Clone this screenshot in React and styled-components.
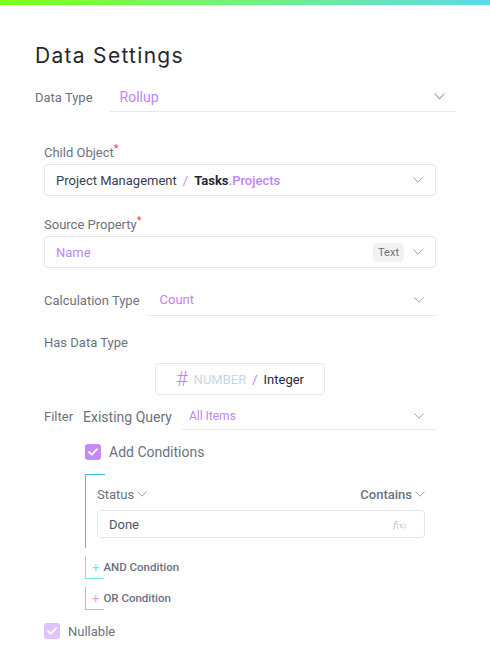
import React from 'react';
import styled, { createGlobalStyle } from 'styled-components';

const purple = '#c084fc';
const gray = '#6b7280';
const border = '#e5e7eb';

const GlobalStyle = createGlobalStyle`
  body {
    margin: 0;
    background: #ffffff;
    font-family: Roboto, Inter, Arial, sans-serif;
    color: #374151;
  }
  * { box-sizing: border-box; }
`;

const Page = styled.div`
  width: 490px;
  min-height: 652px;
  background: #fff;
`;

const TopBar = styled.div`
  height: 5px;
  background: linear-gradient(90deg, #7cff14 0%, #6ef08a 55%, #5cd9e8 100%);
`;

const Content = styled.div`
  padding: 37px 35px 0 35px;
`;

const Title = styled.h1`
  margin: 0;
  font-family: Inter, Roboto, sans-serif;
  font-size: 21px;
  line-height: 28px;
  font-weight: 400;
  letter-spacing: 1.3px;
  color: #27272a;
`;

const Row = styled.div`
  display: flex;
  align-items: center;
  margin-top: ${p => p.$top || 0}px;
`;

const InlineLabel = styled.span`
  font-size: ${p => p.$size || 13}px;
  color: ${gray};
  margin-right: ${p => p.$gap || 11}px;
  white-space: nowrap;
`;

const UnderSelect = styled.div`
  flex: 1;
  display: flex;
  align-items: center;
  justify-content: space-between;
  height: ${p => p.$h || 32}px;
  padding: 0 ${p => p.$pr || 12}px 0 ${p => p.$pl || 10}px;
  border-bottom: 1px solid ${border};
`;

const Value = styled.span`
  color: ${purple};
  font-size: ${p => p.$size || 13}px;
`;

const Section = styled.div`
  margin: 0 19px 0 9px;
`;

const FieldLabel = styled.div`
  font-size: 13px;
  line-height: 18px;
  color: ${gray};
  margin-top: ${p => p.$top || 0}px;
  margin-bottom: 2px;
  sup {
    color: #ef4444;
    font-size: 11px;
    vertical-align: top;
    line-height: 10px;
  }
`;

const BoxSelect = styled.div`
  display: flex;
  align-items: center;
  height: 32px;
  padding: 0 12px 0 11px;
  border: 1px solid ${border};
  border-radius: 4px;
  font-size: 13px;
`;

const Grow = styled.div`
  flex: 1;
  white-space: nowrap;
`;

const Path = styled.span`
  color: #374151;
`;

const Slash = styled.span`
  color: ${purple};
  margin: 0 6px;
`;

const Strong = styled.span`
  color: #1f2937;
  font-weight: 700;
`;

const Accent = styled.span`
  color: ${purple};
  font-weight: 500;
`;

const Badge = styled.span`
  font-size: 11px;
  color: #6b7280;
  background: #f1f2f4;
  border-radius: 4px;
  padding: 3px 5px;
  margin-right: 9px;
`;

const TypeWrap = styled.div`
  display: flex;
  justify-content: center;
  margin-top: 11px;
`;

const TypeBox = styled.div`
  display: flex;
  align-items: center;
  justify-content: center;
  width: 170px;
  height: 32px;
  border: 1px solid ${border};
  border-radius: 4px;
  font-size: 13px;
`;

const Hash = styled.span`
  color: ${purple};
  font-size: 20px;
  font-weight: 300;
  margin-right: 6px;
  line-height: 1;
`;

const Muted = styled.span`
  color: #cbd5e1;
`;

const Dark = styled.span`
  color: #1f2937;
`;

const Indent = styled.div`
  margin-left: 41px;
`;

const CheckRow = styled.label`
  display: flex;
  align-items: center;
  gap: 8px;
  margin-top: ${p => p.$top || 0}px;
  font-size: ${p => p.$size || 14}px;
  color: ${gray};
`;

const CheckBox = styled.span`
  width: 16px;
  height: 16px;
  border-radius: 3px;
  background: ${p => (p.$disabled ? '#dec4fb' : '#c48af8')};
  display: flex;
  align-items: center;
  justify-content: center;
`;

const ConditionBlock = styled.div`
  position: relative;
  margin-top: 14px;
  padding: 11px 11px 10px 11px;
  border-left: 1px solid #3fbff5;
  &::before {
    content: '';
    position: absolute;
    left: -1px;
    top: 0;
    width: 20px;
    height: 1px;
    background: #3fbff5;
  }
`;

const CondHead = styled.div`
  display: flex;
  justify-content: space-between;
  align-items: center;
  font-size: 13px;
  color: ${gray};
  height: 18px;
`;

const HeadItem = styled.span`
  display: flex;
  align-items: center;
  gap: 3px;
  font-weight: ${p => (p.$bold ? 500 : 400)};
`;

const CondInput = styled.div`
  display: flex;
  align-items: center;
  justify-content: space-between;
  margin-top: 7px;
  height: 28px;
  padding: 0 18px 0 11px;
  border: 1px solid ${border};
  border-radius: 4px;
  font-size: 13px;
  color: #4b5563;
`;

const Fx = styled.span`
  font-family: "DejaVu Serif", "Liberation Serif", serif;
  font-style: italic;
  font-size: 10px;
  color: #b8bec8;
  small { font-size: 7px; font-style: normal; }
`;

const AddCondition = styled.div`
  display: flex;
  align-items: center;
  height: 23px;
  margin-top: ${p => p.$top}px;
  width: 19px;
  border-left: 1px solid ${p => p.$color};
  border-bottom: 1px solid ${p => p.$color};
  font-size: 11.5px;
  font-weight: 500;
  color: ${gray};
  white-space: nowrap;
  span {
    color: ${p => p.$color};
    font-size: 13px;
    font-weight: 400;
    margin: 0 4px 0 6px;
  }
`;

const Chevron = ({ w = 10 }) => (
  <svg width={w} height={w * 0.6} viewBox="0 0 10 6" fill="none">
    <path d="M0.5 0.5 L5 5.2 L9.5 0.5" stroke="#9ca3af" strokeWidth="1" />
  </svg>
);

const Check = () => (
  <svg width="10" height="8" viewBox="0 0 10 8" fill="none">
    <path d="M1 4 L3.8 6.6 L9 1.2" stroke="#fff" strokeWidth="1.8" strokeLinecap="round" strokeLinejoin="round" />
  </svg>
);

export default function App() {
  return (
    <Page>
      <GlobalStyle />
      <TopBar />
      <Content>
        <Title>Data Settings</Title>
        <Row $top={12}>
          <InlineLabel $gap={17}>Data Type</InlineLabel>
          <UnderSelect $h={30} $pr={10}>
            <Value $size={14}>Rollup</Value>
            <Chevron w={11} />
          </UnderSelect>
        </Row>

        <Section>
          <FieldLabel $top={32}>Child Object<sup>*</sup></FieldLabel>
          <BoxSelect>
            <Grow>
              <Path>Project Management</Path>
              <Slash>/</Slash>
              <Strong>Tasks</Strong>
              <Accent>.Projects</Accent>
            </Grow>
            <Chevron />
          </BoxSelect>

          <FieldLabel $top={20}>Source Property<sup>*</sup></FieldLabel>
          <BoxSelect>
            <Grow><Value>Name</Value></Grow>
            <Badge>Text</Badge>
            <Chevron />
          </BoxSelect>

          <Row $top={16}>
            <InlineLabel $gap={9}>Calculation Type</InlineLabel>
            <UnderSelect $pl={11}>
              <Value>Count</Value>
              <Chevron />
            </UnderSelect>
          </Row>

          <FieldLabel $top={18}>Has Data Type</FieldLabel>
          <TypeWrap>
            <TypeBox>
              <Hash>#</Hash>
              <Muted>NUMBER</Muted>
              <Slash>/</Slash>
              <Dark>Integer</Dark>
            </TypeBox>
          </TypeWrap>

          <Row $top={8}>
            <InlineLabel $gap={10}>Filter</InlineLabel>
            <InlineLabel $size={14} $gap={10}>Existing Query</InlineLabel>
            <UnderSelect $h={27} $pl={7}>
              <Value $size={12}>All Items</Value>
              <Chevron />
            </UnderSelect>
          </Row>

          <Indent>
            <CheckRow $top={14}>
              <CheckBox><Check /></CheckBox>
              Add Conditions
            </CheckRow>

            <ConditionBlock>
              <CondHead>
                <HeadItem>Status <Chevron /></HeadItem>
                <HeadItem $bold>Contains <Chevron /></HeadItem>
              </CondHead>
              <CondInput>
                Done
                <Fx>f<small>(x)</small></Fx>
              </CondInput>
            </ConditionBlock>

            <AddCondition $top={8} $color="#6ff0c6"><span>+</span>AND Condition</AddCondition>
            <AddCondition $top={8} $color="#f09cf0"><span>+</span>OR Condition</AddCondition>
          </Indent>

          <CheckRow $top={13} $size={13}>
            <CheckBox $disabled><Check /></CheckBox>
            Nullable
          </CheckRow>
        </Section>
      </Content>
    </Page>
  );
}
